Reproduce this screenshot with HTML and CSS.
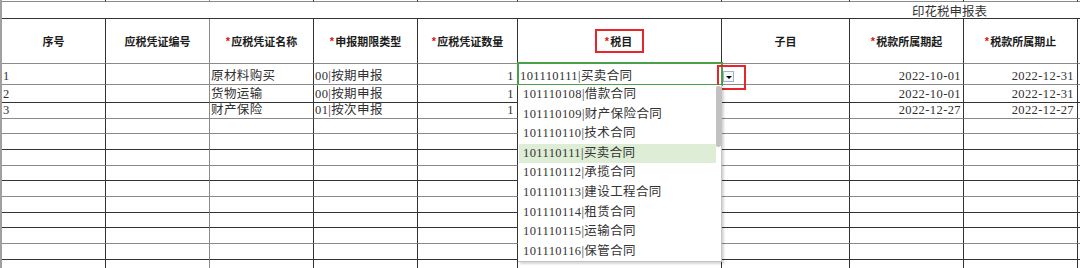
FILE: index.html
```html
<!DOCTYPE html>
<html>
	<head>
		<meta charset="utf-8">
		<title>印花税申报表</title>
		<link rel="stylesheet" href="styles.css">
	</head>
	<body>
		<div class="sheet">
			<!-- 上一行（被截掉） -->
			<div class="row r0 soft">
				<div class="c"></div><div class="c"></div><div class="c"></div><div class="c"></div><div class="c"></div>
				<div class="c"></div><div class="c"></div><div class="c"></div><div class="c"></div><div class="c"></div>
			</div>

			<div class="title-row"><span>印花税申报表</span></div>

			<!-- 表头 -->
			<div class="row head soft">
				<div class="c">序号</div>
				<div class="c">应税凭证编号</div>
				<div class="c"><span class="req">*</span>应税凭证名称</div>
				<div class="c"><span class="req">*</span>申报期限类型</div>
				<div class="c"><span class="req">*</span>应税凭证数量</div>
				<div class="c"><span class="mark"><span class="req">*</span>税目</span></div>
				<div class="c">子目</div>
				<div class="c"><span class="req">*</span>税款所属期起</div>
				<div class="c"><span class="req">*</span>税款所属期止</div>
				<div class="c"></div>
			</div>

			<!-- 数据 -->
			<div class="row r1 soft">
				<div class="c">1</div>
				<div class="c"></div>
				<div class="c">原材料购买</div>
				<div class="c">00|按期申报</div>
				<div class="c r">1</div>
				<div class="c active">
					<span class="val">101110111|买卖合同</span>
					<div class="sel"></div>
					<div class="dd-btn"><i></i></div>
					<div class="redbox"></div>
					<div class="list">
						<div class="opts">
							<div class="opt">101110108|借款合同</div>
							<div class="opt">101110109|财产保险合同</div>
							<div class="opt">101110110|技术合同</div>
							<div class="opt on">101110111|买卖合同</div>
							<div class="opt">101110112|承揽合同</div>
							<div class="opt">101110113|建设工程合同</div>
							<div class="opt">101110114|租赁合同</div>
							<div class="opt">101110115|运输合同</div>
							<div class="opt">101110116|保管合同</div>
						</div>
						<div class="track"><div class="thumb"></div></div>
					</div>
				</div>
				<div class="c"></div>
				<div class="c r d1">2022-10-01</div>
				<div class="c r">2022-12-31</div>
				<div class="c"></div>
			</div>

			<div class="row r2">
				<div class="c">2</div>
				<div class="c"></div>
				<div class="c">货物运输</div>
				<div class="c">00|按期申报</div>
				<div class="c r">1</div>
				<div class="c"></div>
				<div class="c"></div>
				<div class="c r d1">2022-10-01</div>
				<div class="c r">2022-12-31</div>
				<div class="c"></div>
			</div>

			<div class="row r3 soft">
				<div class="c">3</div>
				<div class="c"></div>
				<div class="c">财产保险</div>
				<div class="c">01|按次申报</div>
				<div class="c r">1</div>
				<div class="c"></div>
				<div class="c"></div>
				<div class="c r d1">2022-12-27</div>
				<div class="c r">2022-12-27</div>
				<div class="c"></div>
			</div>

			<!-- 空行 -->
			<div class="row h15 soft"><div class="c"></div><div class="c"></div><div class="c"></div><div class="c"></div><div class="c"></div><div class="c"></div><div class="c"></div><div class="c"></div><div class="c"></div><div class="c"></div></div>
			<div class="row h16"><div class="c"></div><div class="c"></div><div class="c"></div><div class="c"></div><div class="c"></div><div class="c"></div><div class="c"></div><div class="c"></div><div class="c"></div><div class="c"></div></div>
			<div class="row h16 soft"><div class="c"></div><div class="c"></div><div class="c"></div><div class="c"></div><div class="c"></div><div class="c"></div><div class="c"></div><div class="c"></div><div class="c"></div><div class="c"></div></div>
			<div class="row h15"><div class="c"></div><div class="c"></div><div class="c"></div><div class="c"></div><div class="c"></div><div class="c"></div><div class="c"></div><div class="c"></div><div class="c"></div><div class="c"></div></div>
			<div class="row h16 soft"><div class="c"></div><div class="c"></div><div class="c"></div><div class="c"></div><div class="c"></div><div class="c"></div><div class="c"></div><div class="c"></div><div class="c"></div><div class="c"></div></div>
			<div class="row h16"><div class="c"></div><div class="c"></div><div class="c"></div><div class="c"></div><div class="c"></div><div class="c"></div><div class="c"></div><div class="c"></div><div class="c"></div><div class="c"></div></div>
			<div class="row h15"><div class="c"></div><div class="c"></div><div class="c"></div><div class="c"></div><div class="c"></div><div class="c"></div><div class="c"></div><div class="c"></div><div class="c"></div><div class="c"></div></div>
			<div class="row h16 soft"><div class="c"></div><div class="c"></div><div class="c"></div><div class="c"></div><div class="c"></div><div class="c"></div><div class="c"></div><div class="c"></div><div class="c"></div><div class="c"></div></div>
			<div class="row h16"><div class="c"></div><div class="c"></div><div class="c"></div><div class="c"></div><div class="c"></div><div class="c"></div><div class="c"></div><div class="c"></div><div class="c"></div><div class="c"></div></div>
			<div class="row h16"><div class="c"></div><div class="c"></div><div class="c"></div><div class="c"></div><div class="c"></div><div class="c"></div><div class="c"></div><div class="c"></div><div class="c"></div><div class="c"></div></div>
		</div>
	</body>
</html>
```

FILE: styles.css
```css
body{
	margin: 0;
	background-color: #fff;
	font-family: "Liberation Serif", "Noto Sans CJK SC", serif;
	color: #303030;
}

.sheet{
	width: 1080px;
	height: 268px;
	overflow: hidden;
	border-left: 2px solid #a0a0a0;
	box-sizing: border-box;
}

/* 每一行都是一个 grid，列宽照着截图量出来 */
.row{
	display: grid;
	grid-template-columns: 104px 104px 104px 104px 100px 204px 128px 114px 114px 1fr;
}

.c{
	display: flex;
	align-items: flex-end;
	min-width: 0;
	padding: 0 1px 1px;
	box-sizing: border-box;
	border-right: 1px solid #333;
	border-bottom: 1px solid #333;
	font-size: 12.5px;
	line-height: 14px;
	letter-spacing: 0.4px;
	white-space: nowrap;
}
.c:nth-child(2){
	border-right-color: #8a8a8a;
}
.c:last-child{
	border-right: 0;
}
.soft .c{
	border-bottom-color: #8a8a8a;
}

/* 右对齐（数字、日期） */
.r{
	justify-content: flex-end;
	padding-right: 3px;
}
.d1{
	padding-right: 2px;
}

/* 行高 */
.r0{ height: 2px; }
.head{ height: 45px; }
.r1{ height: 21px; }
.r2{ height: 18px; }
.r3{ height: 16px; }
.h15{ height: 15px; }
.h16{ height: 16px; }
.r0 .c{ padding: 0; }

.title-row{
	display: flex;
	justify-content: flex-end;
	align-items: flex-end;
	height: 16px;
	padding-right: 93px;
	border-bottom: 1px solid #333;
	font-family: "Noto Sans CJK SC", sans-serif;
	font-size: 12.5px;
	line-height: 14px;
	color: #333;
}

/* 表头 */
.head .c{
	justify-content: center;
	align-items: center;
	padding: 0;
	letter-spacing: 0;
	font-family: "Noto Sans CJK SC", sans-serif;
	font-size: 11px;
	font-weight: bold;
	color: #1c1c1c;
}
.req{
	margin-right: 1px;
	font-family: "Liberation Sans", sans-serif;
	font-size: 11px;
	color: #e01010;
}
.mark{
	display: inline-flex;
	align-items: center;
	padding: 2px 10px 2px 8px;
	line-height: 16px;
	border: 2px solid #e8262a;
}

/* 当前选中的单元格 + 下拉 */
.active{
	position: relative;
	padding-left: 2px;
}
.sel{
	position: absolute;
	left: -1px;
	top: -2px;
	width: 206px;
	height: 24px;
	box-sizing: border-box;
	border: 2px solid #4aa04a;
}
.dd-btn{
	position: absolute;
	left: 205px;
	top: 7px;
	width: 11px;
	height: 11px;
	box-sizing: border-box;
	display: flex;
	justify-content: center;
	align-items: center;
	border: 1px solid #9fb3c8;
	background-color: #f5f7fa;
}
.dd-btn i{
	width: 0;
	height: 0;
	border-left: 3px solid transparent;
	border-right: 3px solid transparent;
	border-top: 3px solid #000;
	margin-top: 1px;
}
.redbox{
	position: absolute;
	left: 199px;
	top: 1px;
	width: 29px;
	height: 25px;
	box-sizing: border-box;
	border: 2px solid #e8262a;
}

.list{
	position: absolute;
	z-index: 2;
	left: 0;
	top: calc(100% + 1px);
	width: 204px;
	display: flex;
	box-sizing: border-box;
	background-color: #fff;
	border-right: 1px solid #c4c4c4;
	border-bottom: 1px solid #c4c4c4;
	box-shadow: 2px 2px 2px rgba(0, 0, 0, 0.16);
}
.opts{
	width: 197px;
	padding-left: 1px;
}
.opt{
	height: 19.6px;
	line-height: 19.6px;
	padding-left: 4px;
	font-size: 12.5px;
	letter-spacing: 0.4px;
	color: #333;
}
.opt.on{
	background-color: #deedd6;
}
.track{
	width: 5px;
}
.thumb{
	margin-top: 1px;
	height: 61px;
	border-radius: 2px;
	background-color: #c1c1c1;
}
```
